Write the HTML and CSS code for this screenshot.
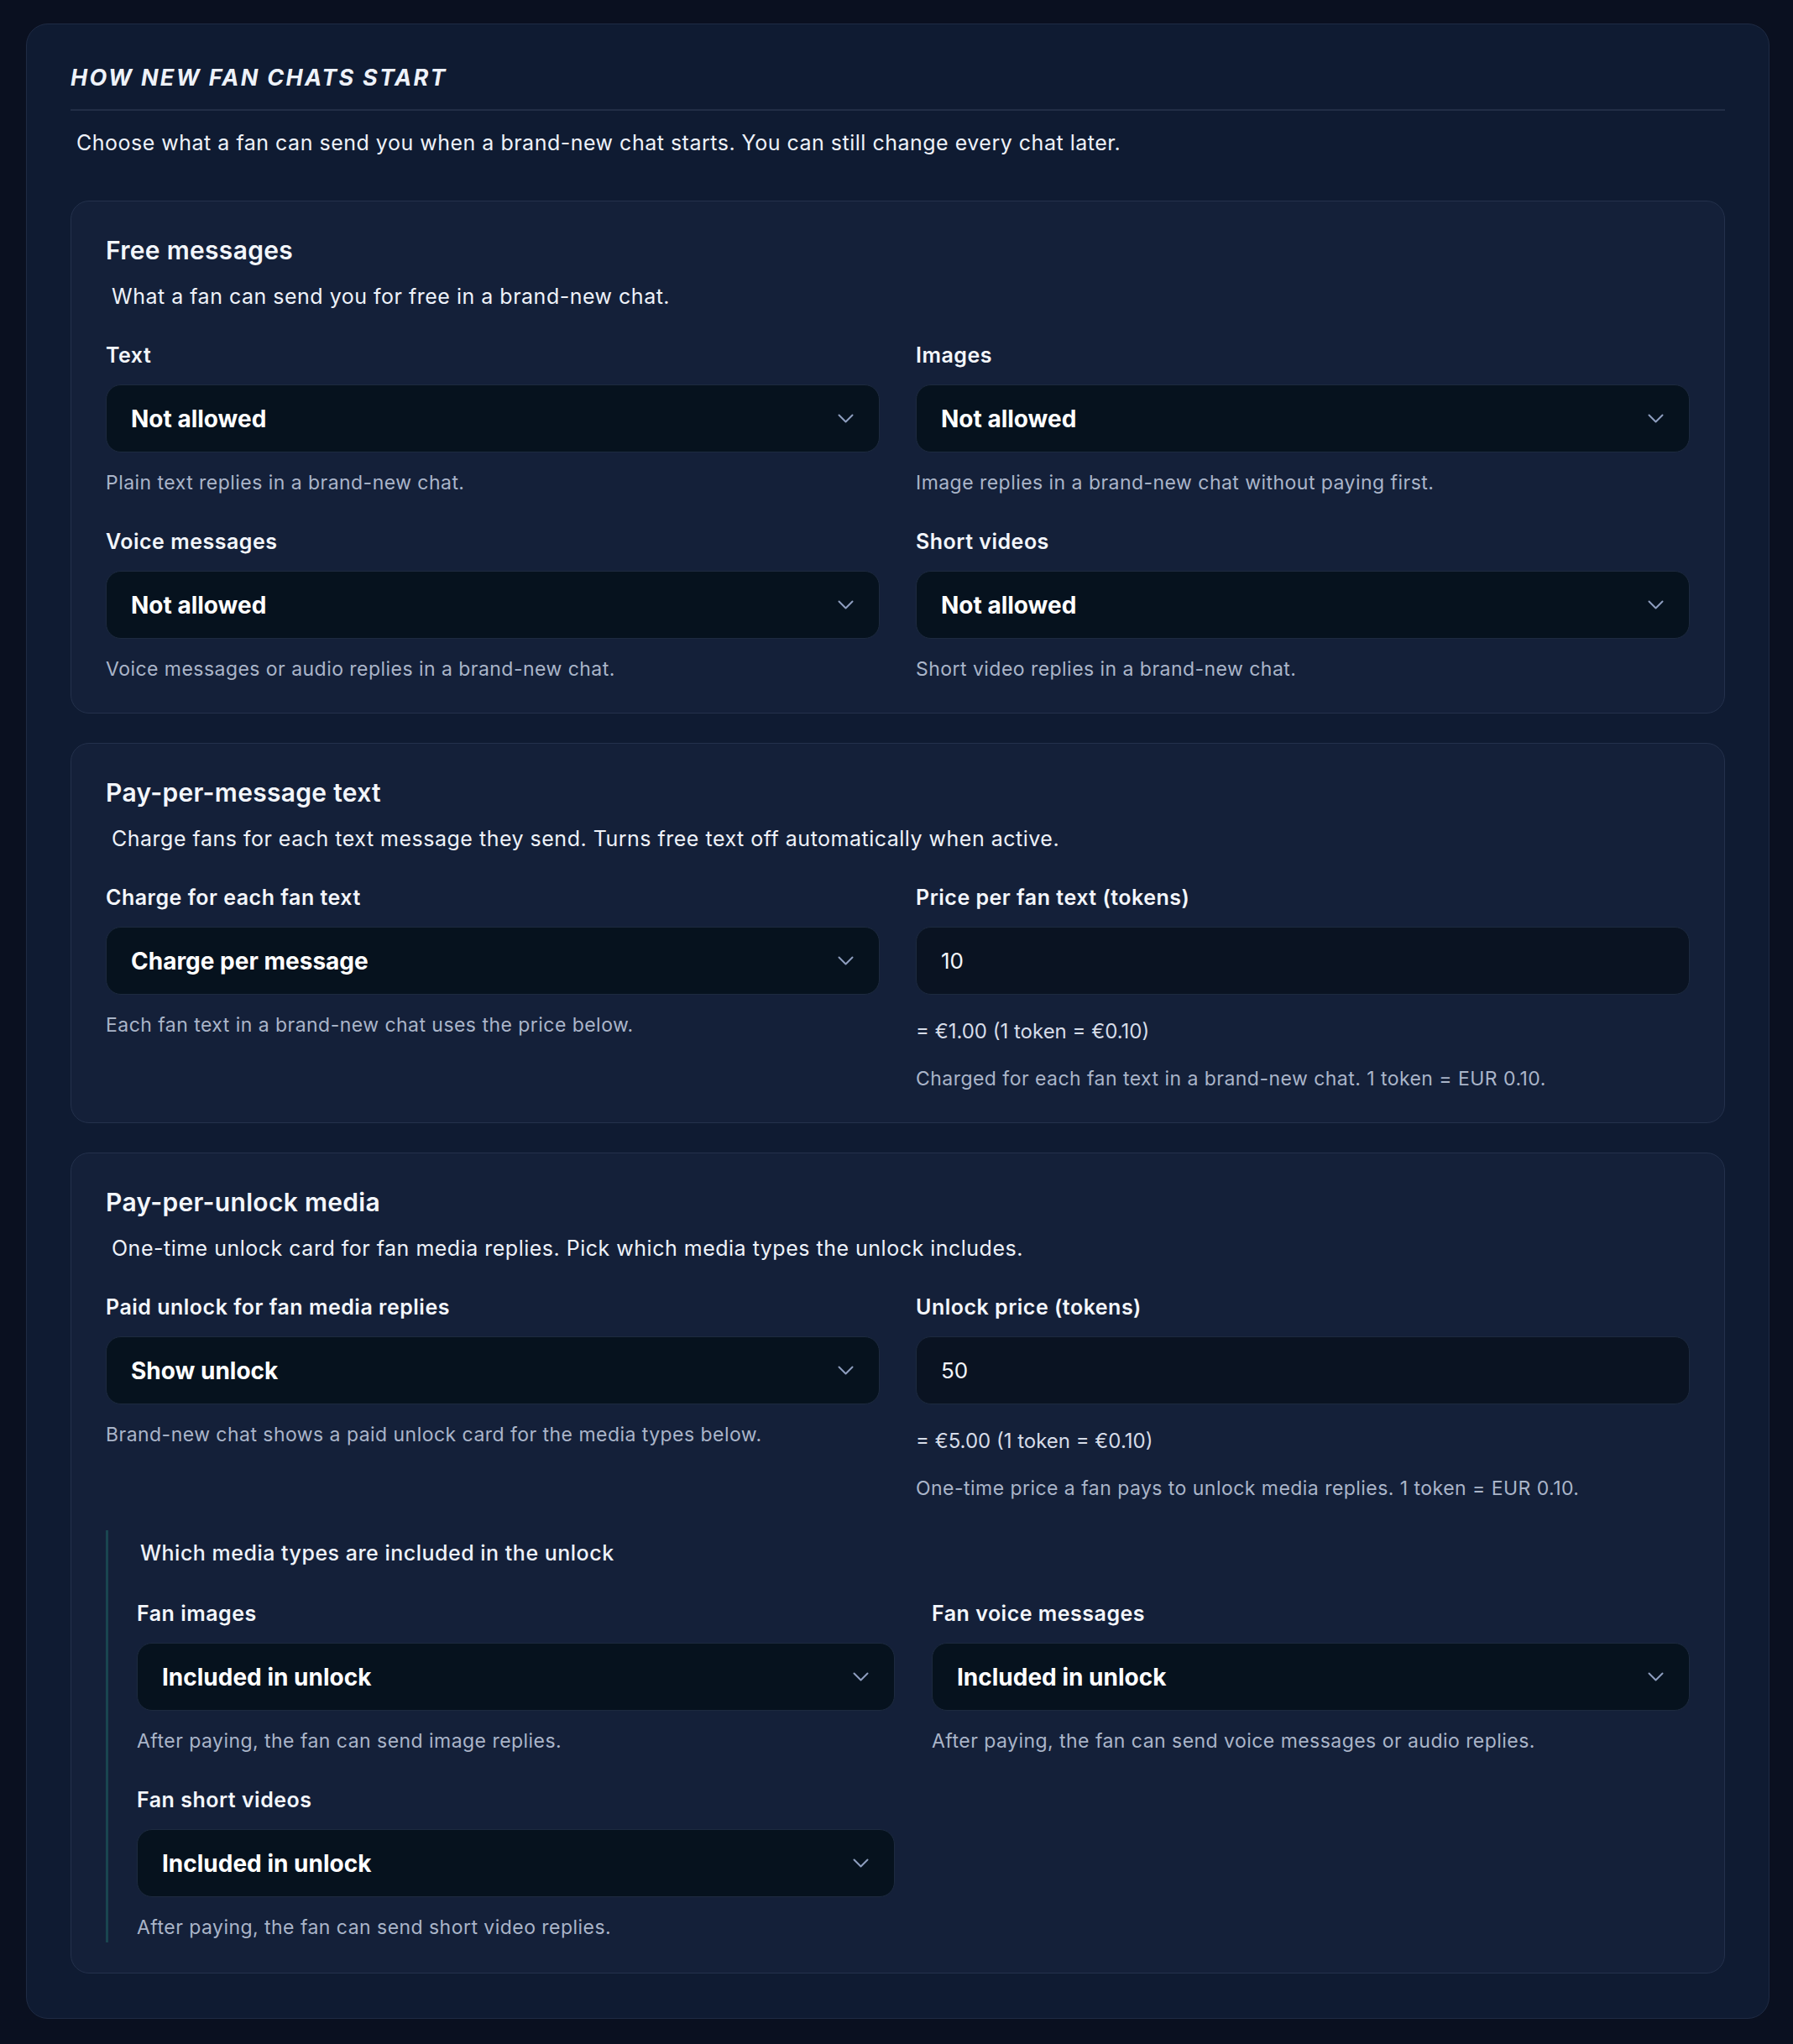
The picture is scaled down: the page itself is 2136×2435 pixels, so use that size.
FILE: index.html
```html
<!DOCTYPE html>
<html lang="en">
<head>
  <meta charset="UTF-8">
  <title>How new fan chats start</title>
  <link rel="stylesheet" href="styles.css">
</head>
<body>

  <section class="panel">
    <h1 class="panel-title">How new fan chats start</h1>
    <p class="panel-desc">Choose what a fan can send you when a brand-new chat starts. You can still change every chat later.</p>

    <div class="card">
      <h2 class="card-title">Free messages</h2>
      <p class="card-sub">What a fan can send you for free in a brand-new chat.</p>
      <div class="grid">
        <div class="field">
          <div class="label">Text</div>
          <div class="select"><span>Not allowed</span><svg width="19" height="11" viewBox="0 0 19 11"><path d="M1.5 1.5 9.5 9.5 17.5 1.5"/></svg></div>
          <div class="help">Plain text replies in a brand-new chat.</div>
        </div>
        <div class="field">
          <div class="label">Images</div>
          <div class="select"><span>Not allowed</span><svg width="19" height="11" viewBox="0 0 19 11"><path d="M1.5 1.5 9.5 9.5 17.5 1.5"/></svg></div>
          <div class="help">Image replies in a brand-new chat without paying first.</div>
        </div>
        <div class="field">
          <div class="label">Voice messages</div>
          <div class="select"><span>Not allowed</span><svg width="19" height="11" viewBox="0 0 19 11"><path d="M1.5 1.5 9.5 9.5 17.5 1.5"/></svg></div>
          <div class="help">Voice messages or audio replies in a brand-new chat.</div>
        </div>
        <div class="field">
          <div class="label">Short videos</div>
          <div class="select"><span>Not allowed</span><svg width="19" height="11" viewBox="0 0 19 11"><path d="M1.5 1.5 9.5 9.5 17.5 1.5"/></svg></div>
          <div class="help">Short video replies in a brand-new chat.</div>
        </div>
      </div>
    </div>

    <div class="card">
      <h2 class="card-title">Pay-per-message text</h2>
      <p class="card-sub">Charge fans for each text message they send. Turns free text off automatically when active.</p>
      <div class="grid">
        <div class="field">
          <div class="label">Charge for each fan text</div>
          <div class="select"><span>Charge per message</span><svg width="19" height="11" viewBox="0 0 19 11"><path d="M1.5 1.5 9.5 9.5 17.5 1.5"/></svg></div>
          <div class="help">Each fan text in a brand-new chat uses the price below.</div>
        </div>
        <div class="field">
          <div class="label">Price per fan text (tokens)</div>
          <input class="input" type="text" value="10">
          <div class="conv">= €1.00 (1 token = €0.10)</div>
          <div class="help help-after">Charged for each fan text in a brand-new chat. 1 token = EUR 0.10.</div>
        </div>
      </div>
    </div>

    <div class="card">
      <h2 class="card-title">Pay-per-unlock media</h2>
      <p class="card-sub">One-time unlock card for fan media replies. Pick which media types the unlock includes.</p>
      <div class="grid">
        <div class="field">
          <div class="label">Paid unlock for fan media replies</div>
          <div class="select"><span>Show unlock</span><svg width="19" height="11" viewBox="0 0 19 11"><path d="M1.5 1.5 9.5 9.5 17.5 1.5"/></svg></div>
          <div class="help">Brand-new chat shows a paid unlock card for the media types below.</div>
        </div>
        <div class="field">
          <div class="label">Unlock price (tokens)</div>
          <input class="input" type="text" value="50">
          <div class="conv">= €5.00 (1 token = €0.10)</div>
          <div class="help help-after">One-time price a fan pays to unlock media replies. 1 token = EUR 0.10.</div>
        </div>
      </div>

      <div class="nested">
        <div class="nested-title">Which media types are included in the unlock</div>
        <div class="grid grid-nested">
          <div class="field">
            <div class="label">Fan images</div>
            <div class="select"><span>Included in unlock</span><svg width="19" height="11" viewBox="0 0 19 11"><path d="M1.5 1.5 9.5 9.5 17.5 1.5"/></svg></div>
            <div class="help">After paying, the fan can send image replies.</div>
          </div>
          <div class="field">
            <div class="label">Fan voice messages</div>
            <div class="select"><span>Included in unlock</span><svg width="19" height="11" viewBox="0 0 19 11"><path d="M1.5 1.5 9.5 9.5 17.5 1.5"/></svg></div>
            <div class="help">After paying, the fan can send voice messages or audio replies.</div>
          </div>
          <div class="field">
            <div class="label">Fan short videos</div>
            <div class="select"><span>Included in unlock</span><svg width="19" height="11" viewBox="0 0 19 11"><path d="M1.5 1.5 9.5 9.5 17.5 1.5"/></svg></div>
            <div class="help">After paying, the fan can send short video replies.</div>
          </div>
        </div>
      </div>
    </div>
  </section>

</body>
</html>
```

FILE: styles.css
```css
body {
  margin: 0;
  padding: 28px 28px 30px 31px;
  background-color: #0a1020;
  font-family: Inter, "Noto Sans", sans-serif;
  font-variation-settings: "opsz" 14;
  color: #f3f6fb;
}
.panel {
  background: #0f1b32;
  border: 1px solid #1f2b44;
  border-radius: 26px;
  padding: 47px 52px 53px;
}
.panel-title {
  margin: 0;
  padding-bottom: 20px;
  border-bottom: 2px solid #222e46;
  font-size: 27px;
  line-height: 34px;
  font-weight: 700;
  font-style: italic;
  letter-spacing: 0.085em;
  text-transform: uppercase;
  color: #eef2f9;
}
.panel-desc {
  margin: 21px 0 52px;
  padding-left: 7px;
  font-size: 25px;
  line-height: 34px;
  letter-spacing: 0.02em;
  color: #eef2f9;
}
.card {
  background: #142039;
  border: 1px solid #24314c;
  border-radius: 22px;
  padding: 38px 41px 36px;
  margin-bottom: 35px;
}
.card:last-child {
  margin-bottom: 0;
}
.card-title {
  margin: 0;
  font-size: 30px;
  line-height: 40px;
  font-weight: 600;
  letter-spacing: 0.01em;
  color: #f3f6fb;
}
.card-sub {
  margin: 18px 0 0;
  padding-left: 7px;
  font-size: 25px;
  line-height: 34px;
  letter-spacing: 0.02em;
  color: #eef2f9;
}
.grid {
  display: grid;
  grid-template-columns: 1fr 1fr;
  column-gap: 43px;
  row-gap: 37px;
  margin-top: 36px;
}
.label {
  font-size: 25px;
  line-height: 34px;
  font-weight: 600;
  letter-spacing: 0.02em;
  color: #f3f6fb;
}
.select,
.input {
  box-sizing: border-box;
  width: 100%;
  height: 81px;
  margin-top: 18px;
  border: 1px solid #1d2a3f;
  border-radius: 18px;
}
.select {
  display: flex;
  align-items: center;
  justify-content: space-between;
  padding: 0 30px 0 29px;
  background: #06121e;
  font-size: 28px;
  font-weight: 700;
  color: #ffffff;
}
.select svg {
  fill: none;
  stroke: #8e9ebf;
  stroke-width: 2;
  stroke-linecap: round;
  stroke-linejoin: round;
}
.input {
  display: block;
  padding: 0 29px;
  background: #0a1322;
  font-family: inherit;
  font-size: 26px;
  color: #f3f6fb;
  outline: none;
}
.help {
  margin-top: 20px;
  font-size: 23px;
  line-height: 32px;
  letter-spacing: 0.02em;
  color: #aab5c9;
}
.conv {
  margin-top: 28px;
  font-size: 24px;
  line-height: 32px;
  color: #d6dce8;
}
.help-after {
  margin-top: 24px;
}
.nested {
  margin-top: 34px;
  border-left: 3px solid #1a4550;
  padding: 10px 0 2px 34px;
}
.nested-title {
  padding-left: 4px;
  font-size: 25px;
  line-height: 34px;
  font-weight: 500;
  letter-spacing: 0.02em;
  color: #eef2f9;
}
.grid-nested {
  column-gap: 44px;
  margin-top: 38px;
}
```
